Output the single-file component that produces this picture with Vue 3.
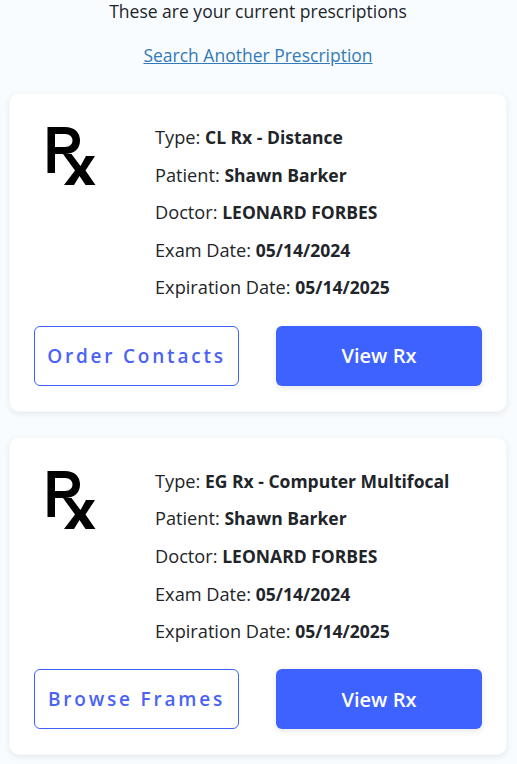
<template>
  <div class="page">
    <p class="intro">These are your current prescriptions</p>
    <a class="searchLink" href="#">Search Another Prescription</a>

    <div v-for="rx in prescriptions" :key="rx.type" class="rxCard">
      <div class="rxInfo">
        <div class="rxIcon">
          <svg width="50" height="60" viewBox="0 0 50 60">
            <path fill-rule="evenodd" d="M0.500 47V1H18C27 1 33 6 33 14.500C33 23 27 28 18 28H8V47ZM8 8V21H18C23 21 25.500 18 25.500 14.500C25.500 11 23 8 18 8Z" fill="#000" />
            <path d="M16 28H24.500L33.500 40L39 30H48L38.500 44.500L48.500 59H38.500L32.500 50L27 59H17L28 44.500Z" fill="#000" />
          </svg>
        </div>
        <div class="rxDetails">
          <p>Type: <b>{{ rx.type }}</b></p>
          <p>Patient: <b>Shawn Barker</b></p>
          <p>Doctor: <b>LEONARD FORBES</b></p>
          <p>Exam Date: <b>05/14/2024</b></p>
          <p>Expiration Date: <b>05/14/2025</b></p>
        </div>
      </div>
      <div class="rxActions">
        <button class="outlineBtn">{{ rx.action }}</button>
        <button class="viewBtn">View Rx</button>
      </div>
    </div>
  </div>
</template>

<script setup>
const prescriptions = [
  { type: 'CL Rx - Distance', action: 'Order Contacts' },
  { type: 'EG Rx - Computer Multifocal', action: 'Browse Frames' }
]
</script>

<style>
html, body {
  margin: 0;
  background-color: #f9fcff;
}
</style>

<style scoped>
.page {
  height: 764px;
  overflow: hidden;
  box-sizing: border-box;
  padding: 0 10px 0 9px;
  font-family: "Open Sans", sans-serif;
  font-size: 17.5px;
  color: #212529;
  display: flex;
  flex-direction: column;
  align-items: center;
}

.intro {
  margin: -1px 0 0 0;
  line-height: 24px;
}

.searchLink {
  margin-top: 20px;
  line-height: 24px;
  color: #337ab7;
  text-decoration: underline;
}

.rxCard {
  width: 100%;
  box-sizing: border-box;
  margin-top: 26px;
  padding: 31px 24px 25px 24px;
  background-color: white;
  border: 1px solid #f8f8f8;
  border-radius: 10px;
  box-shadow: 0 2px 6px rgba(0, 0, 0, 0.08);
}

.rxCard + .rxCard {
  margin-top: 25px;
}

.rxInfo {
  display: flex;
}

.rxIcon {
  width: 121px;
  padding-left: 13px;
  box-sizing: border-box;
  flex-shrink: 0;
}

.rxIcon svg {
  display: block;
  margin-top: 1px;
}

.rxDetails p {
  margin: 0 0 13.6px 0;
  line-height: 24px;
  font-size: 18.2px;
}

.rxDetails b {
  font-size: 17.5px;
  font-weight: 700;
}

.rxActions {
  display: flex;
  justify-content: space-between;
  margin-top: 12.75px;
}

.rxActions button {
  height: 60px;
  border-radius: 6px;
  font-family: "Open Sans", sans-serif;
  cursor: pointer;
}

.outlineBtn {
  width: 205px;
  background-color: white;
  border: 1px solid #3d62ff;
  color: #4a62f5;
  font-size: 19px;
  font-weight: 600;
  letter-spacing: 2.8px;
  white-space: nowrap;
  padding: 0;
}

.viewBtn {
  width: 206px;
  background-color: #3d62ff;
  border: none;
  color: white;
  font-size: 20px;
  font-weight: 600;
  box-shadow: 0 2px 6px rgba(0, 0, 0, 0.1);
}
</style>
